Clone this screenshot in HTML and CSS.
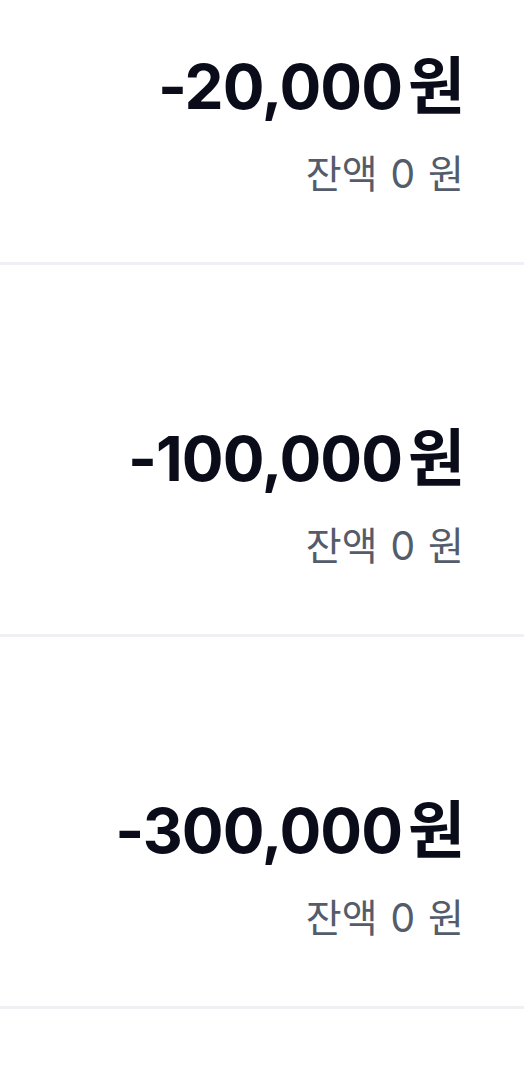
FILE: index.html
```html
<!DOCTYPE html>
<html lang="ko">
<head>
<meta charset="utf-8">
<link rel="stylesheet" href="styles.css">
</head>
<body>
<ul class="list">
  <li class="row">
    <div class="amount">-20,000<span class="unit">원</span></div>
    <div class="balance">잔액 0 원</div>
  </li>
  <li class="row">
    <div class="amount">-100,000<span class="unit">원</span></div>
    <div class="balance">잔액 0 원</div>
  </li>
  <li class="row">
    <div class="amount">-300,000<span class="unit">원</span></div>
    <div class="balance">잔액 0 원</div>
  </li>
  <li class="row"></li>
</ul>
</body>
</html>
```
FILE: styles.css
```css
html, body {
  margin: 0;
  padding: 0;
  background: #ffffff;
}
body {
  font-family: Inter, "Noto Sans CJK KR", sans-serif;
  overflow: hidden;
  height: 1065px;
}
.list {
  list-style: none;
  margin: -107px 0 0 0;
  padding: 0;
}
.row {
  box-sizing: border-box;
  height: 372px;
  border-bottom: 3px solid #eff0f4;
  display: flex;
  flex-direction: column;
  justify-content: flex-end;
  align-items: flex-end;
  padding: 0 60px 65px 0;
}
.amount {
  font-size: 62px;
  line-height: 76px;
  font-weight: 700;
  color: #0a0c19;
  letter-spacing: -1px;
}
.unit {
  margin-left: 6px;
}
.balance {
  margin-top: 26px;
  font-size: 39px;
  line-height: 46px;
  word-spacing: 2px;
  color: #545c6b;
}
```
